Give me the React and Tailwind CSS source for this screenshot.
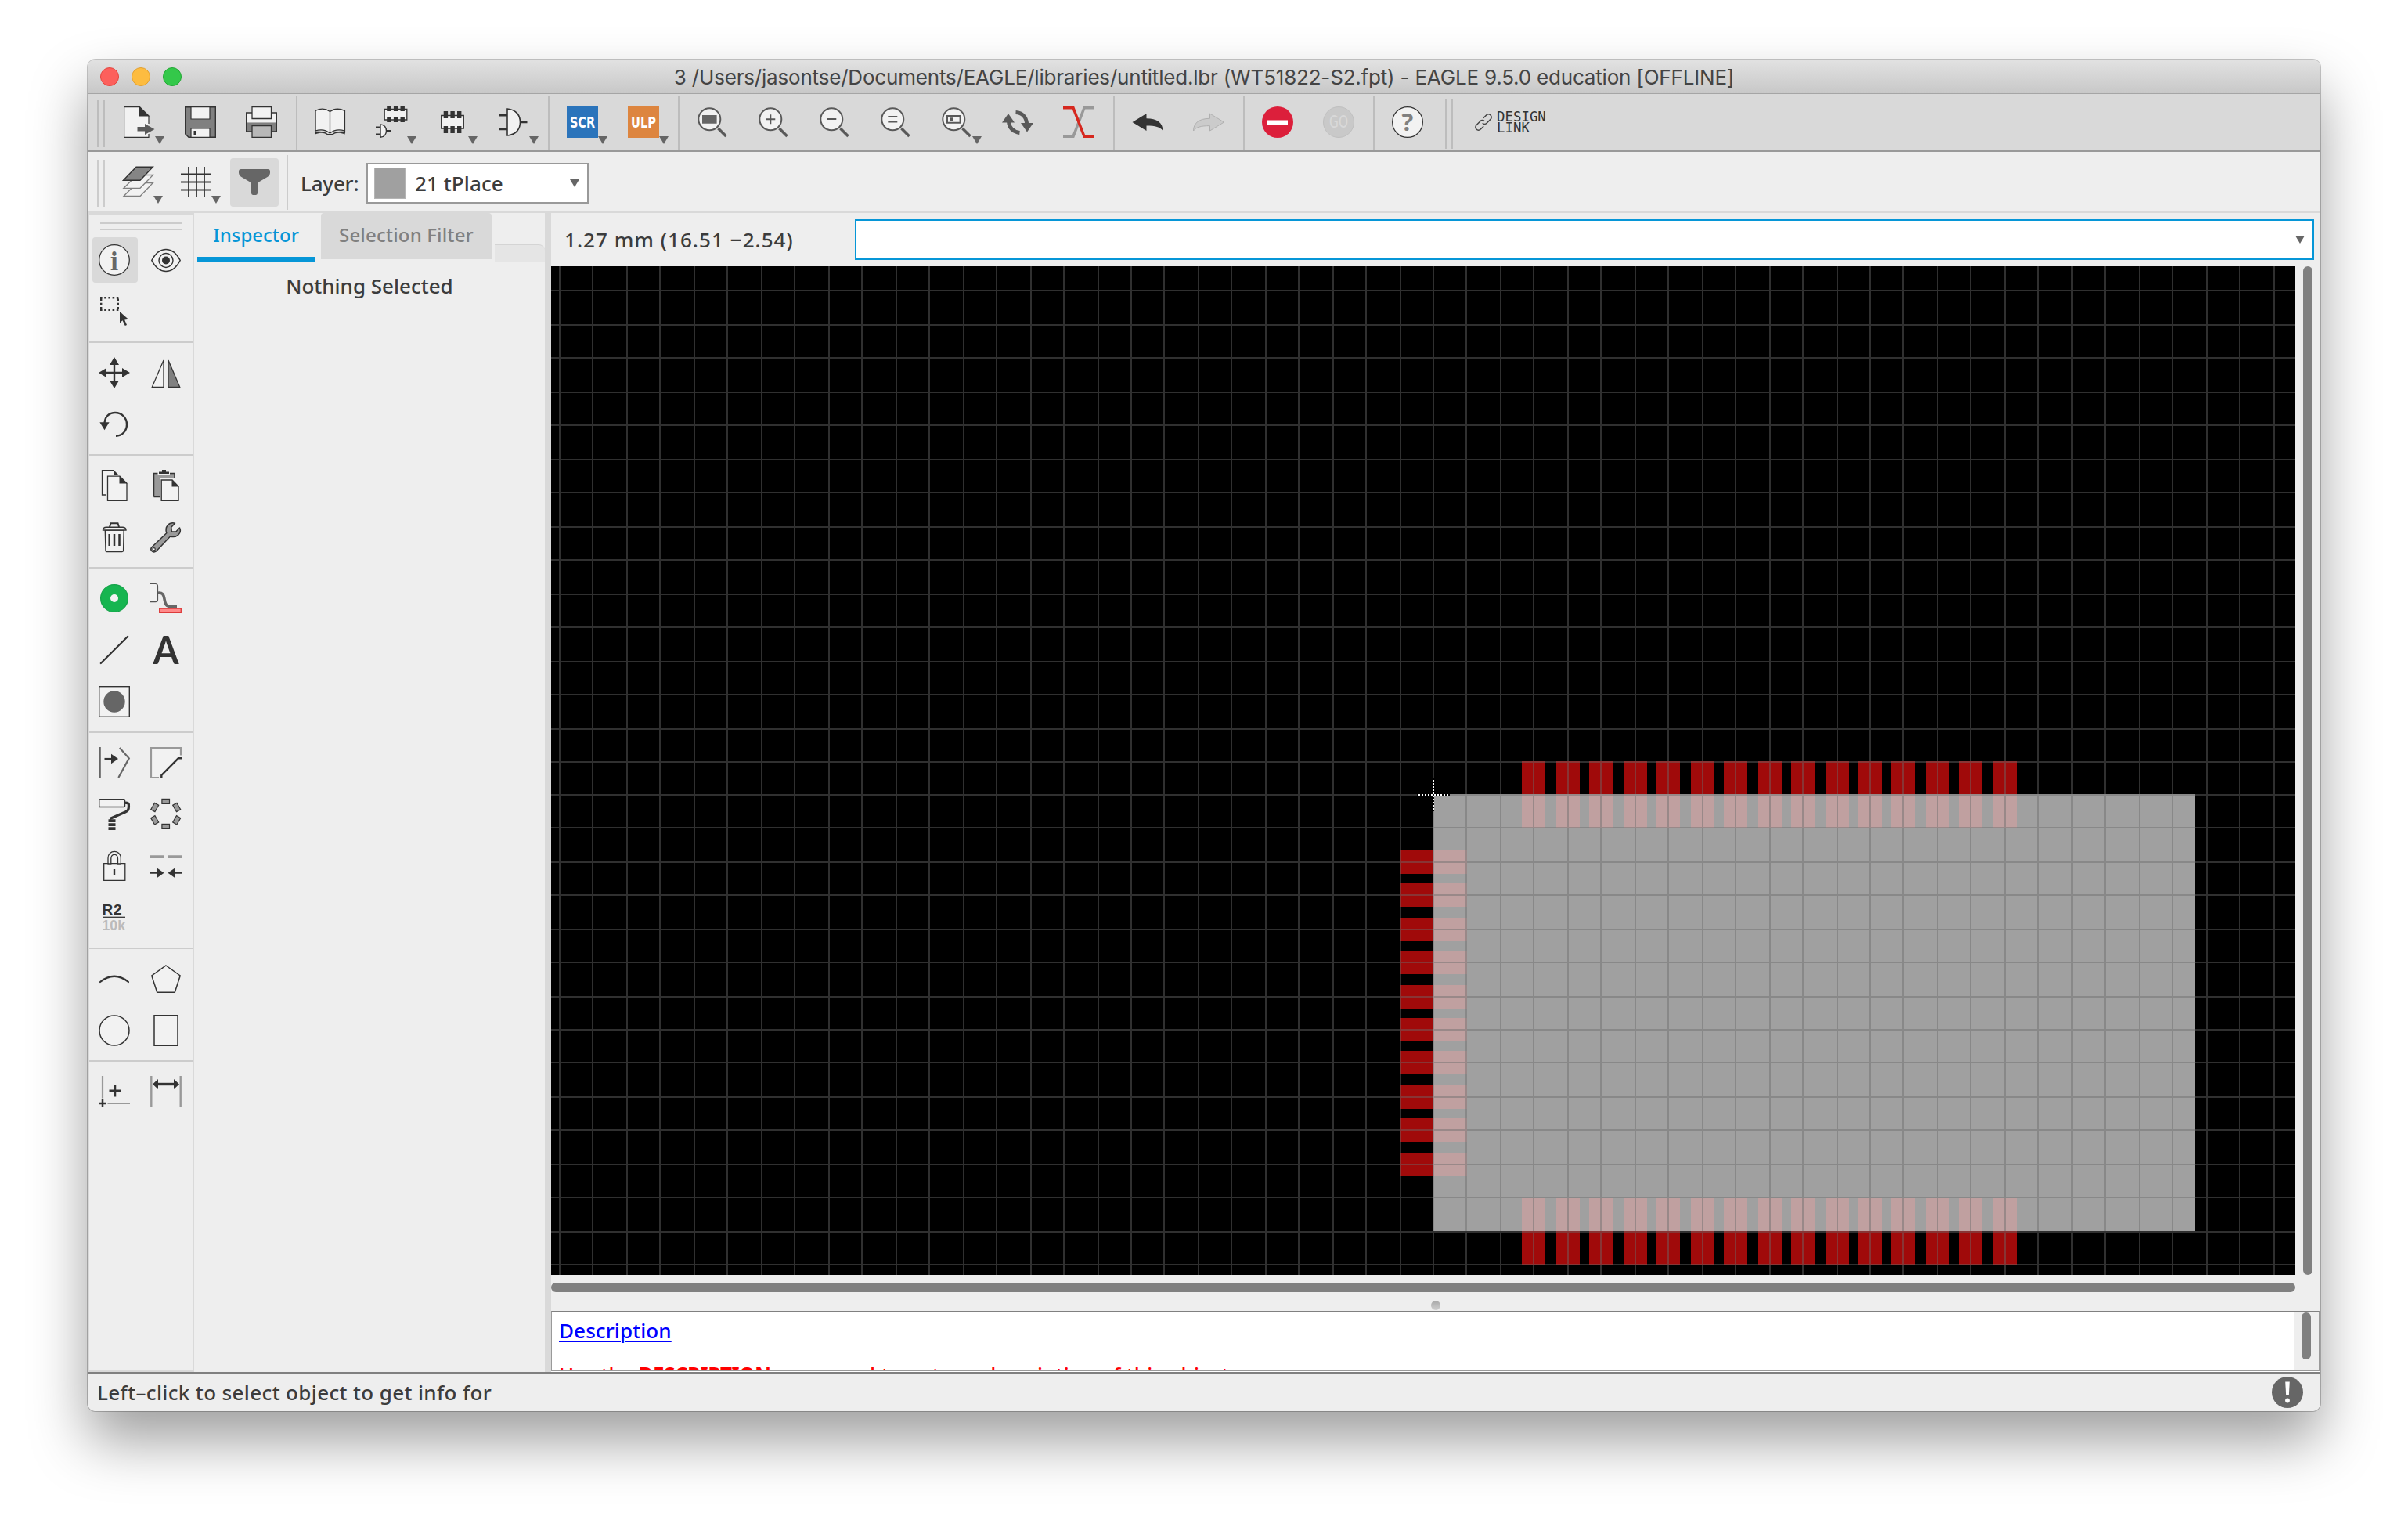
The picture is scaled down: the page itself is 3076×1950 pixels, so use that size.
import React from "react";

const INK = "#333333";
const MID = "#808080";
const LIGHT = "#f2f2f2";
const DIM = "#999999";

function Icon({ children }) {
  return (
    <svg className="block h-10 w-10 shrink-0 overflow-visible" viewBox="0 0 40 40" fill="none">
      {children}
    </svg>
  );
}

function Caret({ className = "" }) {
  return (
    <svg className={"block h-[10px] w-[12px] shrink-0 " + className} viewBox="0 0 12 10">
      <path d="M0 0H12L6 10Z" fill="#666666" />
    </svg>
  );
}

/* ---------- main toolbar icons ---------- */

const NewIcon = () => (
  <Icon>
    <path d="M32 22V12L20.5 .6H.6V39.4H32V35" fill={LIGHT} />
    <path d="M32 22V12L20.5 .6H.6V39.4H32V35" stroke={INK} strokeWidth="1.2" />
    <path d="M20 0L33 12.5H20Z" fill={INK} />
    <path d="M17.5 26H27V22L39.5 29L27 36V31.5H17.5Z" fill="#595959" />
  </Icon>
);

const SaveIcon = () => (
  <Icon>
    <path d="M.7 .7H39.3V39.3H5L.7 35Z" fill={MID} stroke={INK} strokeWidth="1.4" />
    <path d="M8 .7H32V16H8Z" fill={LIGHT} stroke={INK} strokeWidth="1.2" />
    <path d="M8 28H32V39.3H8Z" fill={LIGHT} stroke={INK} strokeWidth="1.2" />
    <path d="M11.5 31H14V37H11.5Z" fill={INK} />
  </Icon>
);

const PrintIcon = () => (
  <Icon>
    <path d="M.7 8H39.3V20.5H.7Z" fill={LIGHT} />
    <path d="M.7 20.5H39.3V32H.7Z" fill={MID} />
    <path d="M.7 8H39.3V32H.7Z" stroke={INK} strokeWidth="1.4" />
    <path d="M8 .7H32.5V15.5H8Z" fill={LIGHT} stroke={INK} strokeWidth="1.3" />
    <path d="M8 24.5H32.5V39.3H8Z" fill="#b8b8b8" stroke={INK} strokeWidth="1.3" />
  </Icon>
);

const BookIcon = () => (
  <Icon>
    <path d="M.8 5.5C7 2.5 14 2.5 19.5 6.5C25 2.5 32 2.5 38.4 5.5V31C32 29 25 29.5 19.5 34C14 29.5 7 29 .8 31Z" fill={LIGHT} stroke={INK} strokeWidth="1.3" />
    <path d="M19.5 6.5V34" stroke={INK} strokeWidth="1.3" />
    <path d="M.5 32C7 31.5 13 31.5 16.5 35H22.5C26 31.5 32 31.5 38.7 32V35.5C31 32.5 26 33.5 22.5 36.5H16.5C13 33.5 8 32.5 .5 35.5Z" fill={INK} />
    <path d="M.8 5V34M38.4 5V34" stroke={INK} strokeWidth="1.3" />
  </Icon>
);

const Chip = () => (
  <>
    <path d="M.7 3.5H29.3V17H.7Z" fill={LIGHT} stroke={INK} strokeWidth="1.3" />
    <path d="M3.7 0h5.4v6H3.7zM12.4 0h5.4v6h-5.4zM21 0h5.4v6H21zM3.7 14h5.4v6H3.7zM12.4 14h5.4v6h-5.4zM21 14h5.4v6H21z" fill={INK} />
  </>
);

const DeviceIcon = () => (
  <Icon>
    <g transform="translate(10.5 0)"><Chip /></g>
    <path d="M0 26.5H6M0 35.5H6M13 31H19.5" stroke={INK} strokeWidth="2" />
    <path d="M6 23C11 23 13.5 27 13.5 31S11 39.3 6 39.3Z" fill={LIGHT} stroke={INK} strokeWidth="1.4" />
  </Icon>
);

const FootprintIcon = () => (
  <Icon>
    <path d="M5.7 11.5H34.3V28H5.7Z" fill={LIGHT} stroke={INK} strokeWidth="1.3" />
    <path d="M8.7 6h5.4v9H8.7zM17.4 6h5.4v9h-5.4zM26 6h5.4v9H26zM8.7 25h5.4v9H8.7zM17.4 25h5.4v9h-5.4zM26 25h5.4v9H26z" fill={INK} />
  </Icon>
);

const SymbolIcon = () => (
  <Icon>
    <path d="M2 11.3H12M2 29H12M29 20H37.5" stroke={INK} strokeWidth="2.6" />
    <path d="M12 3C24 4 28.5 12 28.5 20S24 36 12 37Z" fill={LIGHT} stroke={INK} strokeWidth="1.6" />
  </Icon>
);

const Badge = ({ color, label }) => (
  <Icon>
    <rect width="40" height="40" fill={color} />
    <text x="4" y="27.3" fill="#fff" fontFamily="DejaVu Sans, sans-serif" fontSize="19.5" fontWeight="700" textLength="32" lengthAdjust="spacingAndGlyphs">{label}</text>
  </Icon>
);

const Lens = ({ children }) => (
  <Icon>
    <path d="M27.5 28L37.5 38" stroke="#595959" strokeWidth="3.6" />
    <circle cx="16.3" cy="16.3" r="14" fill={LIGHT} stroke="#595959" strokeWidth="2" />
    {children}
  </Icon>
);

const RefreshIcon = () => (
  <Icon>
    <path d="M8.5 19C9 27 14 32.5 22.5 33.5" stroke="#595959" strokeWidth="5" />
    <path d="M0 20.5L8 9L16 20.5Z" fill="#595959" />
    <path d="M17.5 7.5C26 8 31 14 31.7 22" stroke="#595959" strokeWidth="5" />
    <path d="M24 21H40L32 32.5Z" fill="#595959" />
  </Icon>
);

const RatsnestIcon = () => (
  <Icon>
    <path d="M0 38.2H13L27 1.8H40" stroke={DIM} strokeWidth="3.4" />
    <path d="M0 1.8H13L27 38.2H40" stroke="#d6281f" strokeWidth="3.4" />
  </Icon>
);

const ARROW = "M.5 20L18.5 9V15.3C32 15.3 39.5 21 39.5 31C36 26.3 30 24.6 18.5 24.6V31Z";
const UndoIcon = () => <Icon><path d={ARROW} fill={INK} /></Icon>;
const RedoIcon = () => (
  <Icon><path d={ARROW} transform="translate(40 0) scale(-1 1)" fill="#cbcbcb" stroke="#b0b0b0" strokeWidth="1" /></Icon>
);

const StopIcon = () => (
  <Icon>
    <circle cx="20" cy="20" r="20" fill="#dc1f3b" />
    <path d="M7 17.5H33V23H7Z" fill="#fff" />
  </Icon>
);

const GoIcon = () => (
  <Icon>
    <circle cx="20" cy="20" r="19.5" fill="#c9c9c9" stroke="#c0c0c0" />
    <text x="8" y="27.3" fill="#d9d9d9" fontFamily="DejaVu Sans, sans-serif" fontSize="20.5" textLength="24" lengthAdjust="spacingAndGlyphs">GO</text>
  </Icon>
);

const HelpIcon = () => (
  <Icon>
    <circle cx="20" cy="20" r="19.4" fill={LIGHT} stroke={INK} strokeWidth="1.2" />
    <text x="20" y="31.3" textAnchor="middle" fill={MID} fontFamily="Open Sans, sans-serif" fontSize="31" fontWeight="700">?</text>
  </Icon>
);

const LinkIcon = () => (
  <svg className="block h-6 w-6" viewBox="0 0 24 24" fill="none" stroke="#444" strokeWidth="1.5">
    <g transform="rotate(-45 12 12)">
      <path d="M8.5 15.8H3A3.8 3.8 0 0 1 3 8.2H10A3.8 3.8 0 0 1 13.8 12" />
      <path d="M15.5 8.2H21A3.8 3.8 0 0 1 21 15.8H14A3.8 3.8 0 0 1 10.2 12" />
    </g>
  </svg>
);

/* ---------- parameter bar icons ---------- */

const LayersIcon = () => (
  <Icon>
    <path d="M2 38.5L19 21.5H39.5L23 38.5Z" fill={LIGHT} stroke={MID} strokeWidth="1.3" />
    <path d="M2 28.3L19 11.5H39.5L23 28.3Z" fill={LIGHT} stroke={MID} strokeWidth="1.3" />
    <path d="M1.5 18.3L18 1.3H39.3L23 18.3Z" fill="#858585" stroke={INK} strokeWidth="1.4" />
  </Icon>
);

const GridIcon = () => (
  <Icon>
    <path d="M11 1V39M21 1V39M31 1V39M1 10.5H39M1 20.5H39M1 30.5H39" stroke={INK} strokeWidth="1.8" />
  </Icon>
);

const FunnelIcon = () => (
  <Icon>
    <path d="M3 3H37Q40 3 40 6V8Q40 11 37 12.7L26 19.3Q24 20.5 24 23V33Q24 36 21.5 36H18.5Q16 36 16 33V23Q16 20.5 14 19.3L3 12.7Q0 11 0 8V6Q0 3 3 3Z" fill="#666666" />
  </Icon>
);

/* ---------- palette icons ---------- */

const InfoIcon = () => (
  <Icon>
    <circle cx="20" cy="20" r="19.3" fill={LIGHT} stroke={INK} strokeWidth="1.3" />
    <text x="20" y="32.5" textAnchor="middle" fill="#666" fontFamily="DejaVu Serif, serif" fontSize="32" fontWeight="700" textLength="10.5" lengthAdjust="spacingAndGlyphs">i</text>
  </Icon>
);

const EyeIcon = () => (
  <Icon>
    <path d="M1.8 20.5C7 10.5 13.5 6.5 20 6.5S33 10.5 38.2 20.5C33 30.5 26.5 34.5 20 34.5S7 30.5 1.8 20.5Z" fill={LIGHT} stroke={INK} strokeWidth="1.5" />
    <circle cx="20" cy="20.5" r="9" stroke={INK} strokeWidth="1.4" />
    <circle cx="20" cy="20.5" r="5" fill={INK} />
  </Icon>
);

const GroupIcon = () => (
  <Icon>
    <path d="M2 2.2H26M2 17.8H26M3.2 3.5V19M24.8 3.5V19" stroke={INK} strokeWidth="2.4" strokeDasharray="2.6 2.6" />
    <path d="M27 20V34.5L30.5 31.3L33.8 38L36 37L33.2 30.5L38 29.7Z" fill={INK} />
  </Icon>
);

const MoveIcon = () => (
  <Icon>
    <path d="M20 6V34M6 20H34" stroke={INK} strokeWidth="2.4" />
    <path d="M20 0L26 10H14ZM20 40L26 30H14ZM0 20L10 14V26ZM40 20L30 14V26Z" fill={INK} />
  </Icon>
);

const MirrorIcon = () => (
  <Icon>
    <path d="M17 4V38.3H2.3Z" fill={LIGHT} stroke={INK} strokeWidth="1.3" />
    <path d="M23 4V38.3H37.7Z" fill={MID} stroke={INK} strokeWidth="1.3" />
  </Icon>
);

const RotateIcon = () => (
  <Icon>
    <path d="M7.5 18.5C8 9.5 14 5 21 5C30 5 36 12 36 20C36 28.5 30 34.7 22 34.7" stroke={INK} strokeWidth="2.4" />
    <path d="M1.4 17.3H13.6L7.5 27.3Z" fill={INK} />
  </Icon>
);

const CopyIcon = () => (
  <Icon>
    <path d="M10 32H4.5V.6H19L24 5.5V8H11V32Z" fill={LIGHT} />
    <path d="M10 32H4.5V.6H19.5" stroke={INK} strokeWidth="1.3" />
    <path d="M19 0L25 6H19Z" fill={INK} />
    <path d="M11.5 8.2H27L36 17.3V39.3H11.5Z" fill={LIGHT} stroke={INK} strokeWidth="1.3" />
    <path d="M26.5 8L36.5 17.6H26.5Z" fill={INK} />
  </Icon>
);

const PasteIcon = () => (
  <Icon>
    <path d="M4.5 4.5H31V11H12.5V34.5H4.5Z" fill={DIM} />
    <path d="M4.5 34.5V4.5H31V11M4.5 34.5H12.5" stroke={INK} strokeWidth="1.5" />
    <path d="M9.5 2H25V7H9.5Z" fill="#eee" />
    <path d="M11 5V2.5H15V0H20V2.5H24V5Z" fill={INK} />
    <path d="M14.2 13H28L36 21.3V39.3H14.2Z" fill={LIGHT} stroke={INK} strokeWidth="1.4" />
    <path d="M27.5 13L36.5 21.6H27.5Z" fill={INK} />
  </Icon>
);

const TrashIcon = () => (
  <Icon>
    <path d="M14 7L15.5 2.2H24.5L26 7" stroke={INK} strokeWidth="2" />
    <path d="M8.3 11L9 37Q9 38.5 10.5 38.5H30Q31.5 38.5 31.6 37L32.2 11Z" fill={LIGHT} stroke={INK} strokeWidth="1.4" />
    <path d="M5.5 11Q5.5 7.2 10 7.2H30.5Q35 7.2 35 11Z" fill={LIGHT} stroke={INK} strokeWidth="1.4" />
    <path d="M13.7 16V31M20 16V31M26.5 16V31" stroke={INK} strokeWidth="2.5" />
  </Icon>
);

const WrenchIcon = () => (
  <Icon>
    <path d="M1.6 33L20.8 14.8C18 6.5 24 .5 31.5 2.2L26.8 7.2L27.3 12.8L32.8 13L37.5 8C40.5 15 34 21.5 25.5 19L7.5 38C4 40.5-1 37 1.6 33Z" fill={DIM} stroke={INK} strokeWidth="1.5" strokeLinejoin="round" />
    <circle cx="4.7" cy="35.2" r="1.6" fill="#fff" stroke={INK} strokeWidth="1.2" />
  </Icon>
);

const PadIcon = () => (
  <Icon>
    <circle cx="20" cy="20" r="17.4" fill="#16b550" stroke="#14a349" strokeWidth="1.2" />
    <circle cx="20" cy="20" r="5" fill={LIGHT} />
  </Icon>
);

const SmdIcon = () => (
  <Icon>
    <path d="M0 1.5H6.5Q9.5 1.5 9.5 4.5V22Q9.5 24.7 6.5 24.7H0" fill={LIGHT} stroke="#555" strokeWidth="1.2" />
    <path d="M10 13.2C15.5 12.8 16.8 14.5 18 21C19.2 28 20.5 30.5 26 30.5H34" stroke="#666" strokeWidth="3.6" />
    <path d="M11.7 33H39.3V38.3H11.7Z" fill="#ff8a8a" stroke="#dc3a3a" strokeWidth="1.3" />
  </Icon>
);

const LineIcon = () => <Icon><path d="M2.8 37L37.2 2.8" stroke={INK} strokeWidth="2.2" strokeLinecap="round" /></Icon>;

const TextIcon = () => (
  <Icon>
    <text x="3.5" y="38" fill={INK} fontFamily="Lato, sans-serif" fontSize="50" fontWeight="700" textLength="33" lengthAdjust="spacingAndGlyphs">A</text>
  </Icon>
);

const HoleIcon = () => (
  <Icon>
    <rect x=".7" y=".7" width="38.6" height="38.6" fill={LIGHT} stroke={INK} strokeWidth="1.4" />
    <circle cx="20" cy="20" r="13.7" fill="#666" />
  </Icon>
);

const SplitIcon = () => (
  <Icon>
    <path d="M1.4 0V40" stroke="#666" strokeWidth="2.8" />
    <path d="M26.8 1L38.8 14.3L25.3 39" stroke="#666" strokeWidth="2.2" />
    <path d="M7.5 15H18" stroke={INK} strokeWidth="2.2" />
    <path d="M16 8.8L25 15L16 21.2Z" fill={INK} />
  </Icon>
);

const MiterIcon = () => (
  <Icon>
    <path d="M1 1H39V13L14 38H1Z" fill={LIGHT} />
    <path d="M39 10.5V1H1V39H11" stroke={DIM} strokeWidth="2.2" />
    <path d="M14.3 40V36L35.8 14.3H40" stroke={INK} strokeWidth="2.4" />
  </Icon>
);

const PaintIcon = () => (
  <Icon>
    <rect x=".7" y=".7" width="32.8" height="9.8" rx="1.2" fill={LIGHT} stroke={INK} strokeWidth="1.4" />
    <path d="M34 5.3C38.6 5 38.6 6.5 38.4 10C38.4 14 37.5 15.3 34 17L14.5 25.5" stroke={INK} strokeWidth="3.3" />
    <path d="M12.5 26.2H21.5V30H12.5ZM12.5 31.3H21.5V35H12.5ZM12.5 36.3H21.5V40H12.5Z" fill={INK} />
  </Icon>
);

const ArrayIcon = () => (
  <Icon>
    {[[19.7, 3.4, 0], [33.7, 11, 60], [33.7, 27.3, 120], [19.7, 35.4, 0], [5.7, 27.3, 60], [5.7, 11, 120]].map(([x, y, a]) => (
      <rect key={`${x}-${y}`} x="-4.8" y="-3" width="9.6" height="6" transform={`translate(${x} ${y}) rotate(${a})`} fill={DIM} stroke={INK} strokeWidth="1.2" />
    ))}
  </Icon>
);

const LockIcon = () => (
  <Icon>
    <path d="M12 17V10C12 -1.5 28.3 -1.5 28.3 10V17M15.8 17V10.5C15.8 3.5 24.5 3.5 24.5 10.5V17" fill={LIGHT} stroke={INK} strokeWidth="1.3" />
    <path d="M6.7 16.7H12V17H15.8V16.7H24.5V17H28.3V16.7H33.8V38.3H6.7Z" fill={LIGHT} stroke={INK} strokeWidth="1.3" />
    <path d="M20 24V31.2" stroke={INK} strokeWidth="2.4" />
  </Icon>
);

const LineUpIcon = () => (
  <Icon>
    <path d="M0 8.2H17.5M22.5 8.2H40" stroke={DIM} strokeWidth="3.8" />
    <path d="M0 28.7H11M29 28.7H40" stroke={INK} strokeWidth="2.2" />
    <path d="M9 22.7L17.5 28.7L9 34.7ZM31 22.7L22.5 28.7L31 34.7Z" fill={INK} />
  </Icon>
);

const ValueIcon = () => (
  <Icon>
    <g fontFamily="Liberation Sans, sans-serif" fontSize="19" fontWeight="700">
      <text x="4.5" y="16" fill={INK} textLength="25">R2</text>
      <text x="4.5" y="36" fill="#bbbbbb" textLength="29.5" lengthAdjust="spacingAndGlyphs">10k</text>
    </g>
    <path d="M5 19.3H34" stroke={INK} strokeWidth="1.3" />
  </Icon>
);

const ArcIcon = () => <Icon><path d="M2 24Q20 9.5 38 24" stroke={INK} strokeWidth="2.2" strokeLinecap="round" /></Icon>;
const PolygonIcon = () => <Icon><path d="M20 3L38.2 16L31.3 37.2H8.7L1.8 16Z" fill={LIGHT} stroke={INK} strokeWidth="1.5" /></Icon>;
const CircleIcon = () => <Icon><circle cx="20" cy="20" r="19" fill={LIGHT} stroke={INK} strokeWidth="1.5" /></Icon>;
const RectIcon = () => <Icon><path d="M5 .8H35V39.2H5Z" fill={LIGHT} stroke={INK} strokeWidth="1.5" /></Icon>;

const OriginIcon = () => (
  <Icon>
    <path d="M5 0V28.5M11.5 35H40" stroke={DIM} strokeWidth="2.2" />
    <path d="M5 30V40M0 35H10M21 11V26.5M13.5 18.8H29" stroke={INK} strokeWidth="2.5" />
  </Icon>
);

const DimensionIcon = () => (
  <Icon>
    <path d="M1.3 0V40M38.7 0V40" stroke={DIM} strokeWidth="2.4" />
    <path d="M8 10.5H32" stroke={INK} strokeWidth="3.4" />
    <path d="M10 4V17L3 10.5ZM30 4V17L37 10.5Z" fill={INK} />
  </Icon>
);

/* ---------- toolbars ---------- */

const toolbarGroups = [
  [[NewIcon, 1], [SaveIcon], [PrintIcon]],
  [[BookIcon], [DeviceIcon, 1], [FootprintIcon, 1], [SymbolIcon, 1]],
  [[() => <Badge color="#2b74bb" label="SCR" />, 1], [() => <Badge color="#dd853f" label="ULP" />, 1]],
  [
    [() => <Lens><path d="M7 11H25.6V21.7H7Z" fill="#666" /></Lens>],
    [() => <Lens><path d="M10.3 16.3H22.3M16.3 10.3V22.3" stroke="#595959" strokeWidth="2" /></Lens>],
    [() => <Lens><path d="M10.3 16H22.3" stroke="#595959" strokeWidth="2.2" /></Lens>],
    [() => <Lens><path d="M10.3 13H22.3M10.3 19.5H22.3" stroke="#595959" strokeWidth="2.2" /></Lens>],
    [() => <Lens><path d="M8 12H24.6V20.7H8Z" stroke="#595959" strokeWidth="2" /><path d="M11.2 14.3H16V18.4H11.2Z" fill="#595959" /></Lens>, 1],
    [RefreshIcon],
    [RatsnestIcon],
  ],
  [[UndoIcon], [RedoIcon]],
  [[StopIcon], [GoIcon]],
  [[HelpIcon]],
];

function MainToolbar() {
  return (
    <div className="flex h-[74px] shrink-0 border-b-2 border-[#999999] bg-[#d9d9d9] pl-[12px]">
      <div className="mt-2 h-[60px] w-[10px] border-x-2 border-[#bdbdbd]" />
      <div className="ml-[6px] flex">
        {toolbarGroups.map((group, g) => (
          <React.Fragment key={g}>
            {g > 0 && <div className="mx-1 mt-[2px] h-[70px] w-[2px] bg-[#bdbdbd]" />}
            {group.map(([Glyph, menu], i) => (
              <div key={i} className="flex w-[78px] items-start pl-[18px] pt-4">
                <Glyph />
                {menu && <Caret className="mt-[38px]" />}
              </div>
            ))}
          </React.Fragment>
        ))}
      </div>
      <div className="ml-2 mt-[6px] h-[64px] w-[10px] border-x-2 border-[#bdbdbd]" />
      <div className="ml-[27px] mt-[20px] flex h-[32px] items-center gap-[5px]">
        <LinkIcon />
        <div className="font-['DejaVu_Sans_Mono',monospace] text-[17.4px] font-medium leading-[14px] text-[#333]">
          <div>DESIGN</div>
          <div>LINK</div>
        </div>
      </div>
    </div>
  );
}

function ParameterBar() {
  return (
    <div className="flex h-[78px] shrink-0 border-b-2 border-[#d9d9d9] bg-[#eeeeee] pl-[12px]">
      <div className="mt-[10px] h-[60px] w-[10px] border-x-2 border-[#cccccc]" />
      <div className="ml-[22px] mt-[18px] flex items-start"><LayersIcon /><Caret className="mt-[38px]" /></div>
      <div className="ml-[22px] mt-[18px] flex items-start"><GridIcon /><Caret className="mt-[38px]" /></div>
      <div className="ml-[12px] mt-[8px] flex h-[62px] w-[62px] items-center justify-center rounded bg-[#d9d9d9]"><FunnelIcon /></div>
      <div className="ml-[10px] mt-1 h-[70px] w-[2px] bg-[#cccccc]" />
      <div className="ml-4 mt-[14px] flex h-[52px] w-[84px] items-center text-[26px] tracking-[-0.2px]">Layer:</div>
      <div className="mt-[14px] flex h-[52px] w-[284px] items-center border-2 border-[#999999] bg-white pl-2 pr-[10px]">
        <div className="h-10 w-10 border border-[#b4b4b4] bg-[#a0a0a0]" />
        <div className="ml-3 flex-1 text-[26px] tracking-[0.1px]">21 tPlace</div>
        <Caret />
      </div>
    </div>
  );
}

const palette = [
  [[InfoIcon, EyeIcon], [GroupIcon]],
  [[MoveIcon, MirrorIcon], [RotateIcon]],
  [[CopyIcon, PasteIcon], [TrashIcon, WrenchIcon]],
  [[PadIcon, SmdIcon], [LineIcon, TextIcon], [HoleIcon]],
  [[SplitIcon, MiterIcon], [PaintIcon, ArrayIcon], [LockIcon, LineUpIcon], [ValueIcon]],
  [[ArcIcon, PolygonIcon], [CircleIcon, RectIcon]],
  [[OriginIcon, DimensionIcon]],
];

function Palette() {
  return (
    <div className="mb-[2px] mt-[2px] w-[132px] shrink-0 bg-[#eeeeee]">
      <div className="ml-[14px] mt-[10px] h-[10px] w-[104px] border-y-2 border-[#cccccc]" />
      {palette.map((rows, s) => (
        <div key={s} className={"py-[5px] " + (s > 0 ? "border-t-2 border-[#cccccc]" : "")}>
          {rows.map((row, r) => (
            <div key={r} className="flex h-[66px] items-center gap-2 pl-1">
              {row.map((Glyph, i) => (
                <div key={i} className={"flex h-[58px] w-[58px] items-center justify-center rounded pr-[2px] " + (s + r + i === 0 ? "bg-[#d9d9d9]" : "")}>
                  <Glyph />
                </div>
              ))}
            </div>
          ))}
        </div>
      ))}
    </div>
  );
}

function Inspector() {
  return (
    <div className="ml-[2px] w-[448px] shrink-0 bg-[#eeeeee]">
      <div className="flex h-[62px] pl-1">
        <div className="h-full w-[150px] border-b-[6px] border-[#0696d7] pt-[10px] text-center text-[24px] leading-[36px] text-[#0696d7]">Inspector</div>
        <div className="ml-2 h-[59px] w-[218px] rounded-t bg-[#d9d9d9] pt-[10px] text-center text-[24px] leading-[36px] tracking-[0.15px] text-[#808080]">Selection Filter</div>
        <div className="ml-1 mt-10 h-[22px] w-16 rounded-tr-lg border-t border-[#d4d4d4] bg-[#e5e5e5]" />
      </div>
      <div className="pt-[13px] text-center text-[26px] leading-[36px]">Nothing Selected</div>
    </div>
  );
}

/* ---------- footprint canvas ---------- */

const ORIGIN_X = 1830;
const ORIGIN_Y = 1014;
const PITCH = 21.478;

// Far from the origin the grid snaps toward it; close by it snaps to the nearest point.
const gridX = (k) => {
  const d = k * PITCH;
  return 2 * (915 + (k > 13 || k < -8 ? Math.trunc(d + 0.1 * Math.sign(k)) : Math.round(d)));
};
const columns = Array.from({ length: 52 }, (_, i) => gridX(i - 26));
const rows = [
  185, 207, 228, 250, 271, 293, 314, 336, 357, 379, 400, 422, 443, 465, 486, 507,
  528, 550, 571, 593, 614, 636, 657, 678, 700, 721, 743, 764, 786, 807,
].map((y) => y * 2);

function Canvas() {
  const pinColumns = columns.slice(29, 44);
  const pinRows = rows.slice(17, 27);
  return (
    <svg className="block h-[1288px] w-[2228px]" viewBox="704 340 2228 1288" shapeRendering="crispEdges">
      <rect x="704" y="340" width="2228" height="1288" fill="#000" />
      <rect x="1830" y="1014" width="974" height="558" fill="#a0a0a0" />
      {pinColumns.map((x) => (
        <g key={x}>
          <rect x={x - 14} y="972" width="30" height="42" fill="#a00a0a" />
          <rect x={x - 14} y="1014" width="30" height="44" fill="#c0a0a0" />
          <rect x={x - 14} y="1530" width="30" height="42" fill="#c0a0a0" />
          <rect x={x - 14} y="1572" width="30" height="44" fill="#a00a0a" />
        </g>
      ))}
      {pinRows.map((y) => (
        <g key={y}>
          <rect x="1788" y={y - 14} width="42" height="30" fill="#a00a0a" />
          <rect x="1830" y={y - 14} width="44" height="30" fill="#c0a0a0" />
        </g>
      ))}
      <path
        d={columns.map((x) => `M${x} 340h2v1288h-2z`).join("") + rows.map((y) => `M704 ${y}h2228v2h-2228z`).join("")}
        fill="#6a6a6a"
        fillOpacity="0.45"
      />
      <rect x="1810" y={ORIGIN_Y} width="42" height="2" fill="#000" />
      <rect x={ORIGIN_X} y="994" width="2" height="42" fill="#000" />
      <path d="M1812 1015H1852M1831 996V1036" stroke="#fff" strokeWidth="2" strokeDasharray="2 2" />
    </svg>
  );
}

function Workspace() {
  return (
    <div className="ml-2 flex w-[2260px] flex-col bg-[#eeeeee]">
      <div className="flex h-[68px] shrink-0 items-center pl-[17px]">
        <div className="w-[371px] whitespace-nowrap text-[26px] tracking-[1.05px]">1.27 mm (16.51 −2.54)</div>
        <div className="flex h-[52px] w-[1864px] items-center justify-end border-2 border-[#0696d7] bg-white pr-[10px]">
          <Caret />
        </div>
      </div>
      <div className="flex h-[1288px] shrink-0 gap-[10px]">
        <Canvas />
        <div className="h-full w-3 rounded-full bg-[#808080]" />
      </div>
      <div className="mt-[10px] h-3 w-[2228px] shrink-0 rounded-full bg-[#808080]" />
      <div className="flex h-6 shrink-0 items-end justify-center pb-[1px] pr-0">
        <div className="h-3 w-3 rounded-full bg-linear-to-b from-[#a8a8a8] to-[#d0d0d0]" />
      </div>
      <div className="flex h-[77px] w-[2259px] shrink-0 overflow-hidden border border-[#9a9a9a] border-t-[#808080] bg-white">
        <div className="h-[75px] flex-1 overflow-hidden border-b border-[#b0b0b0] pl-[9px] pt-[6px]">
          <div className="text-[26px] leading-[36px] tracking-[0.1px] text-[#0000ff]">
            <span className="underline decoration-[1px] underline-offset-[4px]">Description</span>
          </div>
          <div className="mt-[20px] whitespace-nowrap text-[26px] leading-[36px] text-[#ff0000]">
            Use the <b className="tracking-[-0.5px]">DESCRIPTION</b> <span className="tracking-[0.25px]">command to enter a description of this object.</span>
          </div>
        </div>
        <div className="h-full w-8 bg-[#eeeeee] pl-[10px] pt-[1px]">
          <div className="h-[60px] w-3 rounded-full bg-[#808080]" />
        </div>
      </div>
      <div className="h-px w-full bg-white" />
    </div>
  );
}

export default function App() {
  return (
    <div className="h-[1950px] w-[3076px] overflow-hidden bg-white pl-[112px] pt-[76px] font-['Noto_Sans',sans-serif] font-medium text-[#3c3c3c]">
      <div className="flex h-[1726px] w-[2852px] flex-col overflow-hidden rounded-[10px] shadow-[0_0_0_1px_rgba(0,0,0,0.22),0_38px_72px_rgba(0,0,0,0.38)]">
        <div className="flex h-[44px] shrink-0 items-center border-b border-[#a5a5a5] bg-linear-to-b from-[#e2e2e2] to-[#c8c8c8] px-4 shadow-[inset_0_1px_0_#f4f4f4]">
          <div className="flex w-[600px] gap-4">
            <div className="h-6 w-6 rounded-full border border-[#e2463f] bg-[#fc605c]" />
            <div className="h-6 w-6 rounded-full border border-[#e0a033] bg-[#fdbc40]" />
            <div className="h-6 w-6 rounded-full border border-[#24a735] bg-[#34c84a]" />
          </div>
          <div className="flex-1 whitespace-nowrap pt-[2px] text-center font-['Inter',sans-serif] text-[26px] font-normal leading-[36px] tracking-[-0.19px] text-[#444]">
            3 /Users/jasontse/Documents/EAGLE/libraries/untitled.lbr (WT51822-S2.fpt) - EAGLE 9.5.0 education [OFFLINE]
          </div>
          <div className="w-[600px]" />
        </div>
        <MainToolbar />
        <ParameterBar />
        <div className="flex h-[1480px] shrink-0 bg-[#d9d9d9] pl-[2px]">
          <Palette />
          <Inspector />
          <Workspace />
        </div>
        <div className="flex flex-1 items-center justify-between border-t-2 border-[#808080] bg-[#eeeeee] pl-3 pr-[22px]">
          <div className="text-[26px] leading-[36px] tracking-[0.36px]">Left–click to select object to get info for</div>
          <Icon>
            <circle cx="20" cy="20" r="20" fill="#666" />
            <path d="M17.2 6.5H22.8L21.8 24H18.2Z" fill="#fff" />
            <circle cx="20" cy="30.5" r="2.9" fill="#fff" />
          </Icon>
        </div>
      </div>
    </div>
  );
}
